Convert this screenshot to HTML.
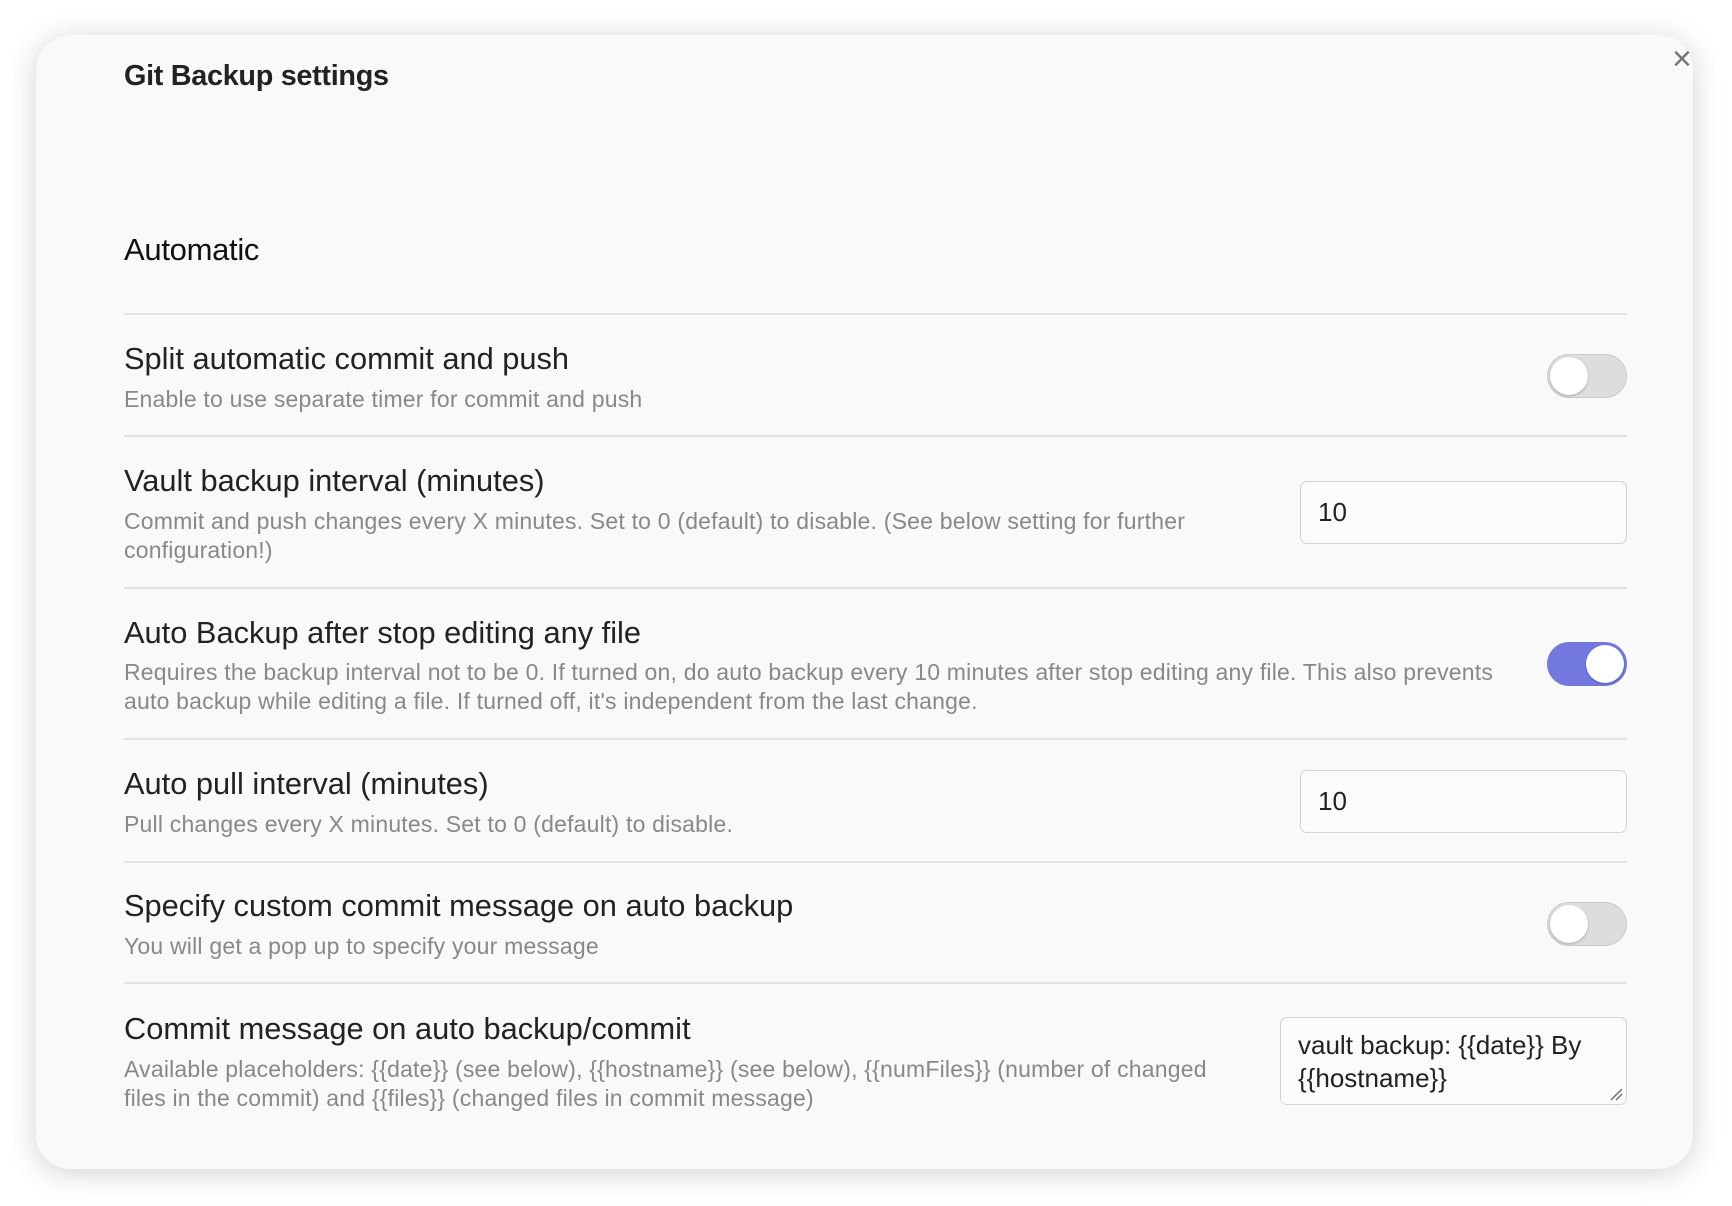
<!DOCTYPE html>
<html><head><style>
body{margin:0;width:1732px;height:1206px;background:#fff;font-family:"Liberation Sans",sans-serif;position:relative;overflow:hidden}
.m{position:absolute;left:36px;top:35px;width:1657px;height:1134px;background:#f9f9f9;border-radius:34px;box-shadow:0 4px 30px rgba(0,0,0,.18)}
.t{position:absolute;white-space:nowrap;color:#222}
.n{font-size:30.8px;line-height:32px}
.d{font-size:23px;line-height:29px;color:#888;letter-spacing:.2px}
.h{font-size:28.8px;font-weight:bold;letter-spacing:-.3px}
.ln{position:absolute;left:124px;width:1503px;height:2px;background:#e2e2e2}
.tg{position:absolute;left:1547px;width:80px;height:44px;border-radius:22px;background:#ddd;box-shadow:inset 0 0 0 1px #ccc}
.tg::after{content:"";position:absolute;left:3px;top:3px;width:38px;height:38px;border-radius:50%;background:#fff;box-shadow:0 1px 2px rgba(0,0,0,.25)}
.tg.on{background:#7278e0;box-shadow:none}
.tg.on::after{left:39px}
.in{position:absolute;left:1300px;width:327px;height:63px;border:1px solid #d4d4d4;border-radius:7px;background:#fbfbfb;box-sizing:border-box;font-size:26px;padding-left:17px;line-height:61px;color:#222}
</style></head><body>
<div class="m"></div>
<div class="t" style="left:1672px;top:40px;font-size:34px;color:#777">×</div>
<div class="t h" style="left:124px;top:60px">Git Backup settings</div>
<div class="t h" style="left:124px;top:232px;font-weight:normal;font-size:31px;color:#111">Automatic</div>
<div class="ln" style="top:313px"></div>
<div class="t n" style="left:124px;top:343px">Split automatic commit and push</div>
<div class="t d" style="left:124px;top:385px">Enable to use separate timer for commit and push</div>
<div class="tg" style="top:354px"></div>
<div class="ln" style="top:435px"></div>
<div class="t n" style="left:124px;top:465px">Vault backup interval (minutes)</div>
<div class="t d" style="left:124px;top:507px">Commit and push changes every X minutes. Set to 0 (default) to disable. (See below setting for further<br>configuration!)</div>
<div class="in" style="top:481px">10</div>
<div class="ln" style="top:587px"></div>
<div class="t n" style="left:124px;top:617px">Auto Backup after stop editing any file</div>
<div class="t d" style="left:124px;top:658px">Requires the backup interval not to be 0. If turned on, do auto backup every 10 minutes after stop editing any file. This also prevents<br>auto backup while editing a file. If turned off, it's independent from the last change.</div>
<div class="tg on" style="top:642px"></div>
<div class="ln" style="top:738px"></div>
<div class="t n" style="left:124px;top:768px">Auto pull interval (minutes)</div>
<div class="t d" style="left:124px;top:810px">Pull changes every X minutes. Set to 0 (default) to disable.</div>
<div class="in" style="top:770px">10</div>
<div class="ln" style="top:861px"></div>
<div class="t n" style="left:124px;top:890px">Specify custom commit message on auto backup</div>
<div class="t d" style="left:124px;top:932px">You will get a pop up to specify your message</div>
<div class="tg" style="top:902px"></div>
<div class="ln" style="top:982px"></div>
<div class="t n" style="left:124px;top:1013px">Commit message on auto backup/commit</div>
<div class="t d" style="left:124px;top:1055px">Available placeholders: {{date}} (see below), {{hostname}} (see below), {{numFiles}} (number of changed<br>files in the commit) and {{files}} (changed files in commit message)</div>
<div class="in" style="left:1280px;width:347px;height:88px;top:1017px;line-height:33px;padding-top:11px;font-size:26px">vault backup: {{date}} By<br>{{hostname}}
<svg style="position:absolute;right:3px;bottom:3px" width="14" height="14"><path d="M2 13L13 2M7 13L13 7" stroke="#666" stroke-width="1.3"/></svg></div>
</body></html>
